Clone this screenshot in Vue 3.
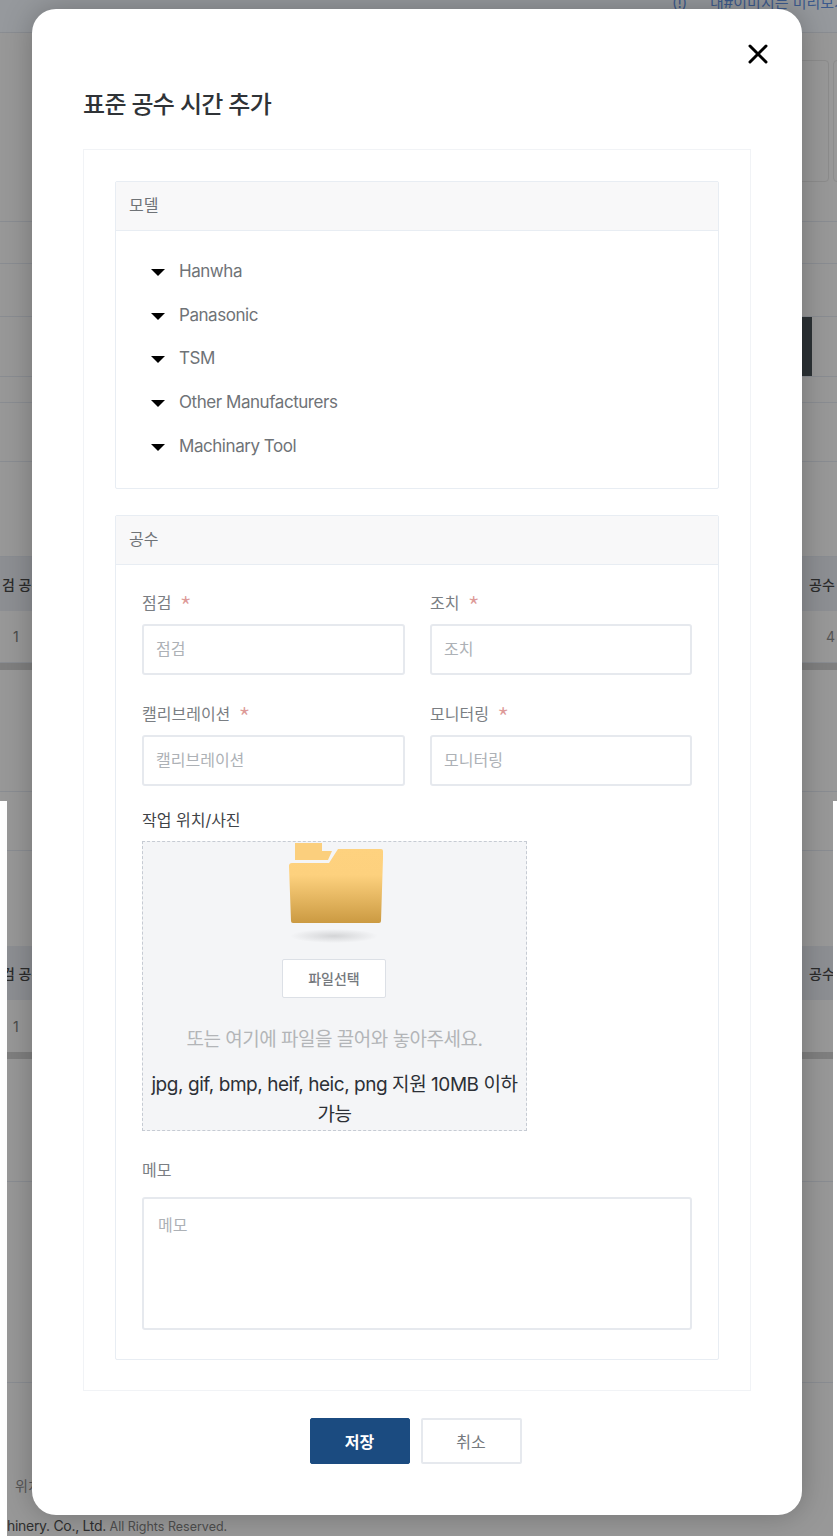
<template>
  <div class="page">
    <!-- 뒤쪽 화면 (위쪽 캡처) -->
    <div class="backdrop backdrop-top">
      <div class="band notice-band"><span class="notice"><b>(!)</b>내#이미지는 미리보기</span></div>
      <div class="band thumbs-band">
        <div class="thumb first"></div>
        <div class="thumb"></div>
      </div>
      <div class="band h42"></div>
      <div class="band h53"></div>
      <div class="band h60"><div class="dark-block"></div></div>
      <div class="band h26"></div>
      <div class="band h59"></div>
      <div class="band plain h95"></div>
      <div class="band table-head"><span class="cell-left">검 공수</span><span>공수 합계</span></div>
      <div class="band plain table-row"><span class="cell-left num">1</span><span class="num four">4</span></div>
      <div class="thick"></div>
      <div class="band h122"></div>
      <div class="plain h9"></div>
    </div>

    <!-- 뒤쪽 화면 (아래쪽 캡처) -->
    <div class="backdrop backdrop-bottom">
      <div class="band h50"></div>
      <div class="plain h95"></div>
      <div class="band table-head shifted"><span class="cell-left">검 공수</span><span>공수 합계</span></div>
      <div class="plain table-row shifted"><span class="cell-left num">1</span></div>
      <div class="thick"></div>
      <div class="band h123"></div>
      <div class="band h201"></div>
      <div class="bottom-rest">
        <span class="pos-label">위치</span>
        <p class="copyright"><b>hinery. Co., Ltd.</b> All Rights Reserved.</p>
      </div>
    </div>

    <!-- 모달 -->
    <div class="modal">
      <button class="close" aria-label="닫기">
        <svg width="24" height="24" viewBox="0 0 24 24">
          <path d="M4 4 L20 20 M20 4 L4 20" stroke="#000" stroke-width="3" stroke-linecap="round" />
        </svg>
      </button>
      <h2 class="title">표준 공수 시간 추가</h2>

      <div class="card">
        <section class="panel">
          <div class="panel-head">모델</div>
          <ul class="tree">
            <li v-for="m in makers" :key="m">
              <i class="caret"></i>{{ m }}
            </li>
          </ul>
        </section>

        <section class="panel second">
          <div class="panel-head">공수</div>
          <div class="panel-body">
            <div class="grid">
              <div v-for="f in fields" :key="f" class="field">
                <label>{{ f }}<em>*</em></label>
                <input type="text" :placeholder="f" />
              </div>
            </div>

            <label class="upload-label">작업 위치/사진</label>
            <div class="dropzone">
              <svg class="folder" width="96" height="102" viewBox="0 0 96 102">
                <defs>
                  <linearGradient id="folderFront" x1="0" y1="0" x2="0" y2="1">
                    <stop offset="0" stop-color="#fed27f" />
                    <stop offset="0.35" stop-color="#fdd17e" />
                    <stop offset="1" stop-color="#cb9a42" />
                  </linearGradient>
                  <radialGradient id="folderShadow">
                    <stop offset="0" stop-color="#d3d4d6" />
                    <stop offset="1" stop-color="#f4f5f7" />
                  </radialGradient>
                </defs>
                <path d="M7 1 H34 V9 H44 L40 18 H7 Z" fill="#fbcf7d" />
                <path d="M1 24 Q1 21 4 21 H41 L50 7 H93 Q95 7 95 9 V16 L93 79 Q93 81 91 81 H5 Q3 81 3 79 Z" fill="url(#folderFront)" />
                <ellipse cx="46" cy="94" rx="44" ry="7" fill="url(#folderShadow)" />
              </svg>
              <button class="pick">파일선택</button>
              <p class="hint">또는 여기에 파일을 끌어와 놓아주세요.</p>
              <p class="formats">jpg, gif, bmp, heif, heic, png 지원 10MB 이하 가능</p>
            </div>

            <label class="memo-label">메모</label>
            <textarea class="memo" placeholder="메모"></textarea>
          </div>
        </section>
      </div>

      <div class="actions">
        <button class="save">저장</button>
        <button class="cancel">취소</button>
      </div>
    </div>
  </div>
</template>

<script setup>
const makers = ['Hanwha', 'Panasonic', 'TSM', 'Other Manufacturers', 'Machinary Tool']
const fields = ['점검', '조치', '캘리브레이션', '모니터링']
</script>

<style>
html, body { background: #fff; }
</style>

<style scoped>
.page {
  position: relative;
  width: 837px;
  height: 1536px;
  overflow: hidden;
  font-family: Inter, "Noto Sans CJK KR", sans-serif;
  color: #333;
}

/* 뒤쪽 화면 */
.backdrop { background: #989898; overflow: hidden; }
.backdrop-top { height: 801px; }
.backdrop-bottom { height: 735px; margin: 0 4px 0 7px; }

.band { border-bottom: 1px solid #8a8d92; box-sizing: border-box; }
.plain { box-sizing: border-box; }
.h9 { height: 9px; }
.h26 { height: 26px; }
.h42 { height: 42px; }
.h50 { height: 50px; }
.h53 { height: 53px; }
.h59 { height: 59px; }
.h60 { height: 60px; }
.h95 { height: 95px; }
.h122 { height: 122px; }
.h123 { height: 123px; }
.h201 { height: 201px; }

.notice-band { height: 33px; background: #96999d; overflow: hidden; }
.notice {
  display: block;
  margin: -7px 0 0 672px;
  font-size: 15px;
  line-height: 20px;
  color: #3c5a8c;
  white-space: nowrap;
}
.notice b { display: inline-block; width: 38px; font-weight: 400; }
.thumbs-band {
  height: 189px;
  display: flex;
  gap: 4px;
  padding: 27px 0 0 780px;
}
.thumb {
  flex: none;
  width: 60px;
  height: 122px;
  border: 1px solid #8c8c8c;
  border-radius: 4px;
  box-sizing: border-box;
}
.thumb.first { width: 49px; }
.dark-block {
  width: 10px;
  height: 59px;
  margin-left: 802px;
  background: #2c3235;
}
.table-head {
  display: flex;
  align-items: center;
  height: 54px;
  background: #8d8f93;
  border: 0;
  padding-left: 2px;
  font-size: 14px;
  font-weight: 500;
  color: #2b2b2b;
  white-space: nowrap;
}
.table-row {
  display: flex;
  align-items: center;
  height: 52px;
  padding-left: 13px;
  font-size: 14px;
  color: #4a4a4a;
}
.table-head.shifted { margin-left: -7px; }
.table-row.shifted { margin-left: -7px; }
.cell-left { flex: none; width: 807px; }
.table-row .cell-left { width: 813px; }
.four { color: #555; }
.thick { height: 7px; background: #7f7f7f; }
.bottom-rest { position: relative; height: 153px; }
.pos-label {
  display: block;
  padding: 93px 0 0 8px;
  font-size: 14px;
  line-height: 20px;
  color: #555;
}
.copyright {
  margin: 21px 0 0;
  font-size: 12.5px;
  line-height: 18px;
  color: #4d4d4d;
  white-space: nowrap;
}
.copyright b { font-size: 14px; font-weight: 400; letter-spacing: -0.3px; color: #2f2f2f; }

/* 모달 */
.modal {
  position: absolute;
  top: 9px;
  left: 32px;
  width: 770px;
  height: 1506px;
  box-sizing: border-box;
  padding: 79px 51px 0;
  background: #fff;
  border-radius: 24px;
  box-shadow: 0 0 30px rgba(0, 0, 0, 0.25);
}
.close {
  position: absolute;
  top: 33px;
  left: 714px;
  width: 24px;
  height: 24px;
  padding: 0;
  border: 0;
  background: none;
}
.title {
  margin: 0 0 27px;
  font-size: 24px;
  font-weight: 500;
  line-height: 34px;
  letter-spacing: -0.7px;
  color: #2f3337;
}
.card {
  box-sizing: border-box;
  height: 1242px;
  padding: 31px;
  border: 1px solid #f1f3f6;
}
.panel {
  border: 1px solid #e8edf3;
  border-radius: 2px;
}
.panel.second { margin-top: 26px; }
.panel-head {
  box-sizing: border-box;
  height: 49px;
  padding: 0 13px;
  line-height: 47px;
  font-size: 16px;
  color: #6f7377;
  background: #f8f8f9;
  border-bottom: 1px solid #e8edf3;
}
.tree {
  list-style: none;
  margin: 0;
  padding: 18px 0 20px 35px;
}
.tree li {
  display: flex;
  align-items: center;
  height: 43.75px;
  font-size: 17px;
  letter-spacing: -0.45px;
  color: #6f7377;
}
.caret {
  width: 0;
  height: 0;
  margin: 3px 14px 0 0;
  border-style: solid;
  border-width: 7px 7.5px 0;
  border-color: #000 transparent transparent;
}
.panel-body { padding: 27px 26px 29px; }
.grid {
  display: grid;
  grid-template-columns: 263px 262px;
  column-gap: 25px;
  row-gap: 28px;
}
.field label,
.upload-label,
.memo-label {
  display: block;
  height: 22px;
  font-size: 16px;
  line-height: 22px;
  color: #7a7e83;
}
.field em {
  margin-left: 8px;
  font-family: "Noto Sans CJK KR", sans-serif;
  font-style: normal;
  font-size: 28px;
  font-weight: 300;
  line-height: 0;
  vertical-align: -9px;
  color: #dd9a98;
}
input,
textarea {
  display: block;
  box-sizing: border-box;
  width: 100%;
  font-family: inherit;
  font-size: 16px;
  background: #fff;
  border: 2px solid #e6e9ee;
  border-radius: 3px;
  outline: none;
}
input {
  height: 51px;
  margin-top: 10px;
  padding: 0 12px;
}
input::placeholder,
textarea::placeholder { color: #adb1b6; }
.upload-label { margin-top: 23px; color: #3f4347; }
.dropzone {
  box-sizing: border-box;
  width: 385px;
  height: 290px;
  margin-top: 10px;
  padding: 0 4px;
  text-align: center;
  word-break: keep-all;
  background: #f4f5f7;
  border: 1px dashed #c6cbd3;
}
.folder { display: block; margin: 0 auto 0 141px; }
.pick {
  display: block;
  width: 104px;
  height: 39px;
  margin: 15px 0 0 135px;
  padding: 0;
  font-family: inherit;
  font-size: 14px;
  font-weight: 500;
  color: #75797e;
  background: #fff;
  border: 1px solid #dce0e6;
  border-radius: 2px;
}
.hint {
  margin: 28px 0 0;
  font-size: 19px;
  line-height: 28px;
  letter-spacing: -0.5px;
  color: #b3b5b8;
}
.formats {
  margin: 16px 0 0;
  font-size: 19px;
  line-height: 30px;
  letter-spacing: -0.45px;
  color: #2c3036;
}
.memo-label { margin-top: 28px; }
.memo {
  height: 133px;
  margin-top: 16px;
  padding: 13px 14px;
  resize: none;
}
.actions {
  display: flex;
  justify-content: center;
  gap: 11px;
  margin-top: 27px;
  padding-right: 3px;
}
.actions button {
  width: 100px;
  height: 46px;
  padding: 0;
  font-family: inherit;
  font-size: 16px;
  border-radius: 2px;
}
.save {
  font-weight: 700;
  color: #fff;
  background: #1b4b80;
  border: 1px solid #1b4b80;
}
.actions .cancel {
  width: 101px;
  color: #75797e;
  background: #fff;
  border: 2px solid #e6e9ee;
}
</style>
